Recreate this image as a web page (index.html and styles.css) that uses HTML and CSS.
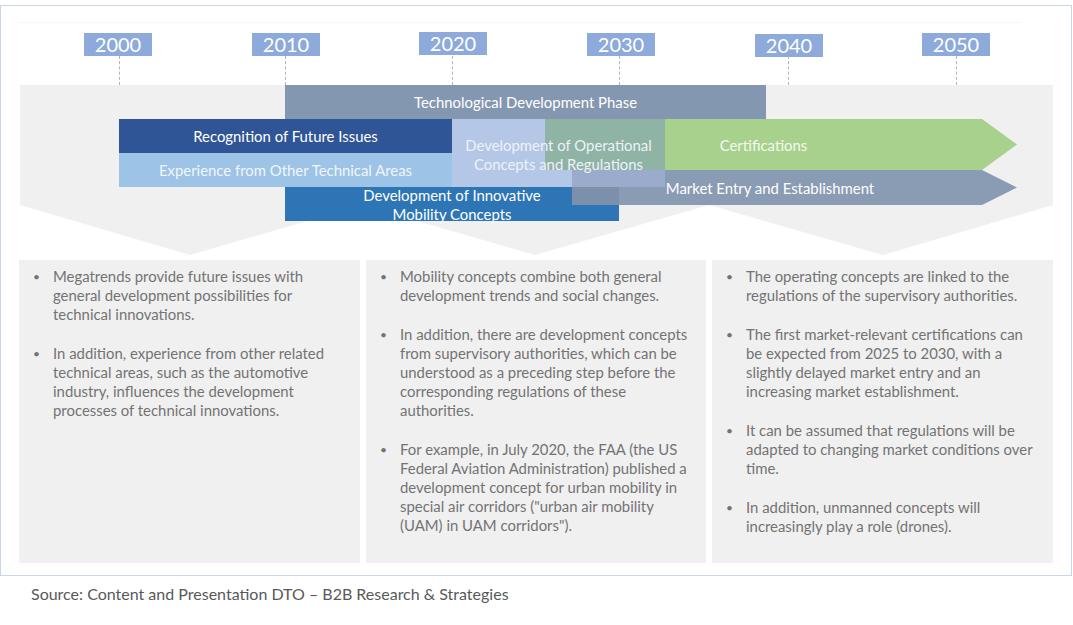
FILE: index.html
```html
<!DOCTYPE html>
<html lang="en">
<head>
<meta charset="utf-8">
<title>Roadmap</title>
<link rel="stylesheet" href="styles.css">
</head>
<body>
<div class="frame">
  <div class="diagram">
    <div class="topline"></div>
    <svg class="bg" width="1070" height="254" viewBox="1 6 1070 254" aria-hidden="true">
      <polygon points="20,85 1053,85 1053,205 883,255 709,205 535,255 362,205 190,255 20,205" fill="#f0f0f0"/>
    </svg>

    <div class="year y2000">2000</div>
    <div class="year y2010">2010</div>
    <div class="year y2020">2020</div>
    <div class="year y2030">2030</div>
    <div class="year y2040">2040</div>
    <div class="year y2050">2050</div>
    <div class="tick t2000"></div>
    <div class="tick t2010"></div>
    <div class="tick t2020"></div>
    <div class="tick t2030"></div>
    <div class="tick t2040"></div>
    <div class="tick t2050"></div>

    <div class="bar tech">Technological Development Phase</div>
    <div class="bar recog">Recognition of Future Issues</div>
    <div class="bar exper">Experience from Other Technical Areas</div>
    <div class="bar ops"></div>
    <div class="bar innov">Development of Innovative<br>Mobility Concepts</div>
    <div class="arrow cert"><span>Certifications</span></div>
    <div class="patch teal"></div>
    <div class="arrow market"><span>Market Entry and Establishment</span></div>
    <div class="patch lav"></div>
    <div class="patch dark"></div>
    <div class="label ops-label">Development of Operational<br>Concepts and Regulations</div>
  </div>

  <div class="panels">
    <ul class="panel">
      <li>Megatrends provide future issues with<br>general development possibilities for<br>technical innovations.</li>
      <li>In addition, experience from other related<br>technical areas, such as the automotive<br>industry, influences the development<br>processes of technical innovations.</li>
    </ul>
    <ul class="panel">
      <li>Mobility concepts combine both general<br>development trends and social changes.</li>
      <li>In addition, there are development concepts<br>from supervisory authorities, which can be<br>understood as a preceding step before the<br>corresponding regulations of these<br>authorities.</li>
      <li>For example, in July 2020, the FAA (the US<br>Federal Aviation Administration) published a<br>development concept for urban mobility in<br>special air corridors ("urban air mobility<br>(UAM) in UAM corridors").</li>
    </ul>
    <ul class="panel">
      <li>The operating concepts are linked to the<br>regulations of the supervisory authorities.</li>
      <li>The first market-relevant certifications can<br>be expected from 2025 to 2030, with a<br>slightly delayed market entry and an<br>increasing market establishment.</li>
      <li>It can be assumed that regulations will be<br>adapted to changing market conditions over<br>time.</li>
      <li>In addition, unmanned concepts will<br>increasingly play a role (drones).</li>
    </ul>
  </div>
</div>
<p class="source">Source: Content and Presentation DTO – B2B Research &amp; Strategies</p>
</body>
</html>
```

FILE: styles.css
```css
* { box-sizing: border-box; }

html, body {
  margin: 0;
  padding: 0;
  background: #ffffff;
}

body {
  font-family: Lato, "Open Sans", sans-serif;
  padding-top: 5px;
}

.frame {
  width: 1072px;
  height: 571px;
  border: 1px solid #c8d5ea;
}

.diagram {
  position: relative;
  height: 254px;
}

.topline {
  position: absolute;
  left: 17px;
  top: 16px;
  width: 1002px;
  height: 1px;
  background: #f6f6f6;
}

.bg {
  position: absolute;
  left: 0;
  top: 0;
}

.year {
  position: absolute;
  width: 68px;
  height: 23px;
  background: #8eaadb;
  color: #ffffff;
  font-size: 20px;
  line-height: 23px;
  text-align: center;
}
.y2000 { left: 83px; top: 27px; }
.y2010 { left: 251px; top: 27px; }
.y2020 { left: 418px; top: 26px; }
.y2030 { left: 586px; top: 27px; }
.y2040 { left: 754px; top: 28px; }
.y2050 { left: 921px; top: 27px; }

.tick {
  position: absolute;
  top: 50px;
  height: 29px;
  border-left: 1px dashed #b3b3b3;
}
.t2000 { left: 118px; }
.t2010 { left: 284px; }
.t2020 { left: 451px; }
.t2030 { left: 618px; }
.t2040 { left: 787px; }
.t2050 { left: 955px; }

.bar, .arrow, .patch, .label {
  position: absolute;
}

.bar, .arrow, .label {
  display: flex;
  align-items: center;
  justify-content: center;
  text-align: center;
  color: #ffffff;
  font-size: 14.9px;
  line-height: 19px;
  padding-top: 1px;
}

.tech { left: 284px; top: 79px; width: 481px; height: 34px; background: #8497b0; }
.recog { left: 118px; top: 113px; width: 333px; height: 34px; background: #2f5597; }
.exper { left: 118px; top: 147px; width: 333px; height: 34px; background: #9dc3e6; color: #f1f6fc; }
.ops { left: 451px; top: 113px; width: 213px; height: 68px; background: #b4c7e7; }
.innov { left: 284px; top: 181px; width: 334px; height: 34px; background: #2e75b6; padding-top: 1px; }

.arrow {
  clip-path: polygon(0 0, calc(100% - 35px) 0, 100% 50%, calc(100% - 35px) 100%, 0 100%);
  padding-right: 35px;
}
.cert { left: 544px; top: 113px; width: 472px; height: 51px; background: #a9d18e; color: #f4f9f0; }
.market { left: 571px; top: 164px; width: 445px; height: 35px; background: #8a9bb4; padding-right: 49px; }

.patch.teal { left: 544px; top: 113px; width: 120px; height: 51px; background: #8fb3a5; }
.patch.lav { left: 571px; top: 164px; width: 93px; height: 17px; background: #9babcb; }
.patch.dark { left: 571px; top: 181px; width: 47px; height: 18px; background: #7c8fab; }

.ops-label {
  left: 451px;
  top: 130px;
  width: 213px;
  height: 36px;
  color: #eef2f8;
  z-index: 2;
}

.panels {
  display: grid;
  grid-template-columns: 341px 340px 341px;
  column-gap: 6px;
  margin-left: 18px;
  height: 303px;
}

.panel {
  margin: 0;
  list-style: none;
  background: #f0f0f0;
  padding: 7px 4px 0 34px;
  color: #737373;
  font-size: 14.9px;
  line-height: 19px;
}

.panel li {
  position: relative;
  margin-bottom: 20px;
}

.panel li::before {
  content: "•";
  position: absolute;
  left: -20px;
  top: 0;
  font-size: 12px;
}

.source {
  margin: 9px 0 0 31px;
  font-size: 16px;
  line-height: 18px;
  color: #595959;
}
```
